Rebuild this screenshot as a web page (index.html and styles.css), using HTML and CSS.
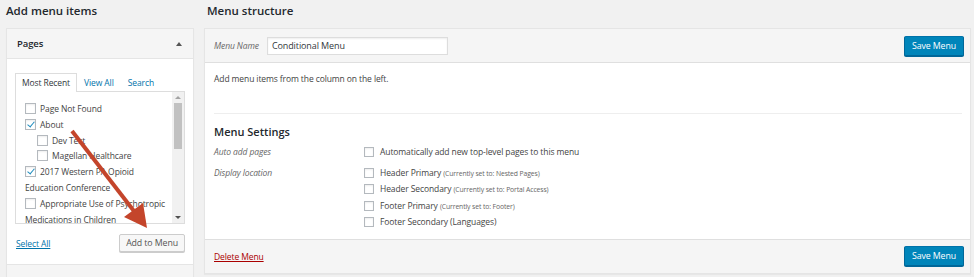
FILE: index.html
```html
<!DOCTYPE html>
<html lang="en">
<head>
  <meta charset="UTF-8" />
  <title>Menus</title>
  <link rel="stylesheet" href="styles.css">
</head>
<body>
  <div class="page">
    <div class="col-left">
      <h2>Add menu items</h2>

      <div class="accordion">
        <div class="section open">
          <h3 class="section-title">Pages <span class="caret up"></span></h3>
          <div class="section-body">
            <ul class="tabs">
              <li class="tab active">Most Recent</li>
              <li class="tab"><a href="#">View All</a></li>
              <li class="tab"><a href="#">Search</a></li>
            </ul>

            <div class="tab-panel">
              <ul class="checklist">
                <li><span class="cb"></span>Page Not Found</li>
                <li><span class="cb checked"></span>About</li>
                <li class="child"><span class="cb"></span>Dev Test</li>
                <li class="child"><span class="cb"></span>Magellan Healthcare</li>
                <li><span class="cb checked"></span>2017 Western PA Opioid Education Conference</li>
                <li><span class="cb"></span>Appropriate Use of Psychotropic Medications in Children</li>
              </ul>
              <div class="scrollbar">
                <span class="sb-arrow sb-up"></span>
                <span class="sb-thumb"></span>
                <span class="sb-arrow sb-down"></span>
              </div>
            </div>

            <div class="actions">
              <a href="#" class="select-all">Select All</a>
              <button class="btn">Add to Menu</button>
            </div>
          </div>
        </div>
        <div class="section">
          <h3 class="section-title">Posts <span class="caret down"></span></h3>
        </div>
      </div>
    </div>

    <div class="col-right">
      <h2>Menu structure</h2>

      <div class="menu-box">
        <div class="menu-header">
          <label class="menu-name">
            <span class="name-label">Menu Name</span>
            <input type="text" value="Conditional Menu" />
          </label>
          <button class="btn btn-primary">Save Menu</button>
        </div>

        <div class="menu-body">
          <p class="hint">Add menu items from the column on the left.</p>

          <div class="settings">
            <h3>Menu Settings</h3>
            <div class="setting-row">
              <div class="setting-label">Auto add pages</div>
              <div class="setting-input">
                <div class="opt"><span class="cb"></span>Automatically add new top-level pages to this menu</div>
              </div>
            </div>
            <div class="setting-row locations">
              <div class="setting-label">Display location</div>
              <div class="setting-input">
                <div class="opt"><span class="cb"></span>Header Primary <small>(Currently set to: Nested Pages)</small></div>
                <div class="opt"><span class="cb"></span>Header Secondary <small>(Currently set to: Portal Access)</small></div>
                <div class="opt"><span class="cb"></span>Footer Primary <small>(Currently set to: Footer)</small></div>
                <div class="opt"><span class="cb"></span>Footer Secondary (Languages)</div>
              </div>
            </div>
          </div>
        </div>

        <div class="menu-footer">
          <a href="#" class="delete">Delete Menu</a>
          <button class="btn btn-primary">Save Menu</button>
        </div>
      </div>
    </div>

    <!-- annotation arrow drawn over the screenshot -->
    <svg class="arrow" width="974" height="277" viewBox="0 0 974 277">
      <line x1="72" y1="131" x2="137" y2="215" stroke="#c4452b" stroke-width="4" />
      <polygon points="147,228 124,217 143,203" fill="#c4452b" />
    </svg>
  </div>
</body>
</html>
```

FILE: styles.css
```css
* {
  box-sizing: border-box;
}

body {
  margin: 0;
  background-color: #f1f1f1;
  color: #444;
  font-family: "Open Sans", "Noto Sans", sans-serif;
  font-size: 8.5px;
  letter-spacing: -0.1px;
}

a {
  color: #0073aa;
}

.page {
  position: relative;
  display: flex;
  gap: 10px;
  height: 277px;
  padding: 0 3px 0 6px;
  overflow: hidden;
}

.col-left {
  width: 188px;
  flex-shrink: 0;
}

.col-right {
  flex: 1;
}

h2 {
  margin: 0;
  height: 28px;
  padding-top: 3px;
  font-size: 11.5px;
  line-height: 16px;
  font-weight: 600;
  color: #23282d;
  letter-spacing: 0;
}

.col-right h2 {
  padding-left: 3px;
}

/* left accordion */
.accordion {
  border: 1px solid #e5e5e5;
  background-color: #fff;
  box-shadow: 0 1px 1px rgba(0, 0, 0, 0.04);
}

.section-title {
  margin: 0;
  height: 30px;
  padding: 0 10px;
  display: flex;
  align-items: center;
  justify-content: space-between;
  background-color: #f5f5f5;
  border-bottom: 1px solid #e5e5e5;
  font-size: 9.5px;
  font-weight: 600;
  color: #23282d;
}

.caret {
  width: 0;
  height: 0;
  margin-right: 1px;
  border-left: 3px solid transparent;
  border-right: 3px solid transparent;
}

.caret.up {
  border-bottom: 4px solid #555;
}

.caret.down {
  border-top: 4px solid #555;
}

.section-body {
  padding: 14px 8px 12px 8px;
  border-bottom: 1px solid #e5e5e5;
}

.tabs {
  list-style: none;
  margin: 0;
  padding: 0;
  display: flex;
  height: 18px;
}

.tab {
  padding: 0 6px;
  line-height: 17px;
  border: 1px solid transparent;
  border-bottom: none;
}

.tab a {
  text-decoration: none;
}

.tab.active {
  border-color: #ddd;
  background-color: #fff;
  color: #32373c;
  margin-bottom: -1px;
  position: relative;
}

.tab-panel {
  display: flex;
  height: 133px;
  border: 1px solid #ddd;
  overflow: hidden;
}

.checklist {
  flex: 1;
  list-style: none;
  margin: 0;
  padding: 9px 4px 0 9px;
}

.checklist li {
  line-height: 15.8px;
}

.checklist li.child {
  padding-left: 12px;
}

.cb {
  display: inline-block;
  width: 11px;
  height: 11px;
  margin-right: 4px;
  vertical-align: -2px;
  border: 1px solid #b4b9be;
  background-color: #fff;
  box-shadow: inset 0 1px 2px rgba(0, 0, 0, 0.07);
  position: relative;
}

.cb.checked::after {
  content: "";
  position: absolute;
  left: 3px;
  top: 0;
  width: 3px;
  height: 6px;
  border-right: 1.5px solid #1e8cbe;
  border-bottom: 1.5px solid #1e8cbe;
  transform: rotate(40deg);
}

.scrollbar {
  width: 12px;
  flex-shrink: 0;
  background-color: #f1f1f1;
  display: flex;
  flex-direction: column;
  align-items: center;
  padding: 4px 0;
}

.sb-arrow {
  width: 0;
  height: 0;
  border-left: 3px solid transparent;
  border-right: 3px solid transparent;
}

.sb-up {
  border-bottom: 3px solid #a3a3a3;
}

.sb-down {
  margin-top: auto;
  border-top: 3px solid #505050;
}

.sb-thumb {
  width: 8px;
  height: 46px;
  margin-top: 4px;
  background-color: #c1c1c1;
}

.actions {
  display: flex;
  justify-content: space-between;
  align-items: center;
  margin-top: 10px;
  padding-left: 1px;
}

.btn {
  height: 18px;
  padding: 0 6px;
  font-family: inherit;
  font-size: 8.8px;
  letter-spacing: -0.1px;
  color: #555;
  background-color: #f7f7f7;
  border: 1px solid #ccc;
  border-radius: 2px;
  box-shadow: 0 1px 0 #ccc;
  cursor: pointer;
}

.btn-primary {
  height: 20px;
  width: 60px;
  padding: 0;
  color: #fff;
  background-color: #0085ba;
  border-color: #0073aa #006799 #006799;
  box-shadow: 0 1px 0 #006799;
}

/* right menu box */
.menu-box {
  border: 1px solid #e5e5e5;
  background-color: #fff;
  box-shadow: 0 1px 1px rgba(0, 0, 0, 0.04);
}

.menu-header,
.menu-footer {
  display: flex;
  align-items: center;
  justify-content: space-between;
  height: 34px;
  padding: 0 6px 0 9px;
  background-color: #f5f5f5;
}

.menu-header {
  border-bottom: 1px solid #dfdfdf;
}

.menu-footer {
  border-top: 1px solid #dfdfdf;
}

.menu-name {
  display: flex;
  align-items: center;
  gap: 8px;
}

.name-label {
  font-style: italic;
  color: #666;
}

.menu-name input {
  width: 181px;
  height: 18px;
  padding: 0 4px;
  font-family: inherit;
  font-size: 9px;
  letter-spacing: -0.1px;
  color: #32373c;
  border: 1px solid #ddd;
  box-shadow: inset 0 1px 2px rgba(0, 0, 0, 0.07);
}

.menu-body {
  padding: 8px 8px 9px 9px;
}

.hint {
  margin: 0;
  line-height: 16px;
  padding-bottom: 26px;
  border-bottom: 1px solid #eee;
}

.settings h3 {
  margin: 10px 0 4px;
  font-size: 11px;
  line-height: 16px;
  font-weight: 600;
  color: #23282d;
  letter-spacing: 0;
}

.setting-row {
  display: flex;
}

.setting-row.locations {
  margin-top: 5px;
}

.setting-label {
  width: 150px;
  line-height: 16px;
  font-style: italic;
  color: #666;
}

.opt {
  line-height: 15.4px;
  color: #444;
}

.opt .cb {
  width: 10px;
  height: 10px;
  margin-right: 6px;
}

.opt small {
  font-size: 6.8px;
  color: #666;
}

.delete {
  color: #a00;
}

.arrow {
  position: absolute;
  left: 0;
  top: 0;
  pointer-events: none;
}
```
